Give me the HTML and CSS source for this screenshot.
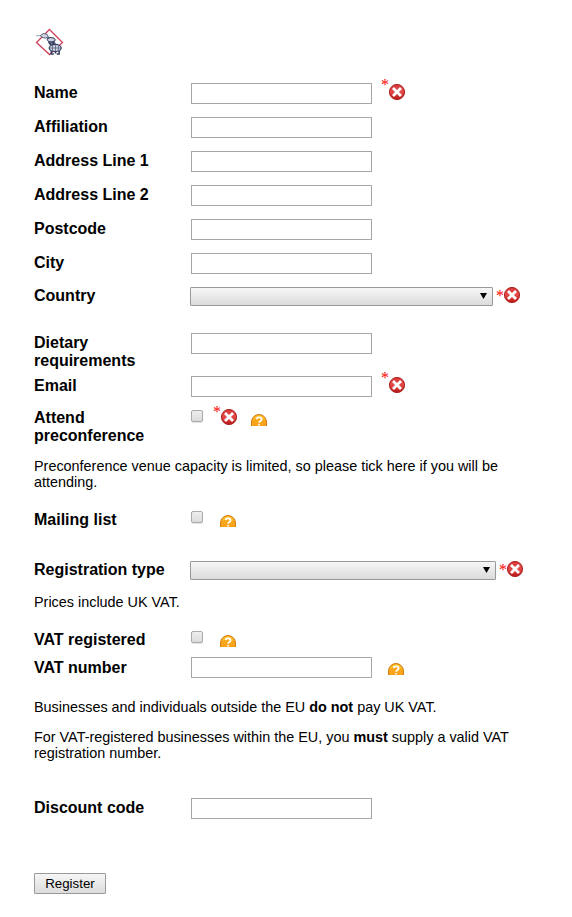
FILE: index.html
```html
<!DOCTYPE html>
<html lang="en">
<head>
  <meta charset="UTF-8" />
  <title>Registration</title>
  <link rel="stylesheet" href="styles.css">
</head>
<body>
  <!-- shared icons -->
  <svg class="defs" width="0" height="0">
    <defs>
      <linearGradient id="red" x1="0" y1="0" x2="0" y2="1">
        <stop offset="0" stop-color="#d83a3a"/>
        <stop offset="0.5" stop-color="#e34b4b"/>
        <stop offset="1" stop-color="#b81616"/>
      </linearGradient>
      <linearGradient id="orange" x1="0" y1="0" x2="0" y2="1">
        <stop offset="0" stop-color="#f8b01c"/>
        <stop offset="1" stop-color="#fba01c"/>
      </linearGradient>
    </defs>
    <symbol id="cross" viewBox="0 0 16 16">
      <circle cx="8" cy="8" r="7.6" fill="url(#red)" stroke="#a51212" stroke-width="0.9"/>
      <path d="M5 5l6 6M11 5l-6 6" stroke="#fff" stroke-width="2.8" stroke-linecap="square"/>
    </symbol>
    <symbol id="help" viewBox="0 0 16 12">
      <path d="M.5 12V8a7.5 7.5 0 0 1 15 0v4z" fill="url(#orange)"/>
      <path d="M.5 12V8a7.5 7.5 0 0 1 15 0v4" fill="none" stroke="#d27a13"/>
      <path d="M2.5 5.5a6 6 0 0 1 11 0" fill="none" stroke="#ffcf3a"/>
      <path d="M5.6 5.2c.3-2.4 5-2.4 5 .2 0 1.7-2.5 1.5-2.5 3.3" fill="none" stroke="#fff" stroke-width="1.8"/>
      <path d="M7.2 10h1.7v1.4H7.2z" fill="#fff"/>
    </symbol>
  </svg>

  <header>
    <svg class="logo" width="30" height="30" viewBox="0 0 30 30">
      <path d="M14.5 1.5L27.5 14.5 14.5 26.5 1.5 14.5z" fill="#fff" stroke="#d0405a" stroke-width="1.3"/>
      <path d="M1 7.6l5 .3" stroke="#9aa5b5"/>
      <path d="M5.5 7.5l3-2 3.5.7 1.3 2.4-2.8 1.6-3.5-.8z" fill="#cdd3de" stroke="#59627c"/>
      <path d="M11 9l2.5 4 3 6 5-1-2-6-5-3z" fill="#6d7690"/>
      <path d="M12 11.2l3-1.7 4 .5 1.4 2.2-3 1.8-4-.5z" fill="#cdd3de" stroke="#343e62"/>
      <path d="M13.5 14l3 4M17 13.5l3 3.5" stroke="#343e62" stroke-width="1.3"/>
      <ellipse cx="20.2" cy="20" rx="6" ry="3.6" fill="#cdd3de" stroke="#343e62" stroke-width="1.2"/>
      <path d="M14.5 20h11.5M17.5 17v6M20.5 16.5v7M23.4 17.5v5.5" stroke="#59627c" stroke-width=".8"/>
      <path d="M16.3 23v3h2.5M20.5 23v2.5M24.2 23v3h-2.5" fill="none" stroke="#343e62" stroke-width="1.5"/>
    </svg>
  </header>

  <form>
    <div class="row">
      <label for="name">Name</label>
      <input type="text" class="text" id="name">
      <span class="star">*</span><svg class="cross"><use href="#cross"/></svg>
    </div>
    <div class="row">
      <label for="affiliation">Affiliation</label>
      <input type="text" class="text" id="affiliation">
    </div>
    <div class="row">
      <label for="address1">Address Line 1</label>
      <input type="text" class="text" id="address1">
    </div>
    <div class="row">
      <label for="address2">Address Line 2</label>
      <input type="text" class="text" id="address2">
    </div>
    <div class="row">
      <label for="postcode">Postcode</label>
      <input type="text" class="text" id="postcode">
    </div>
    <div class="row">
      <label for="city">City</label>
      <input type="text" class="text" id="city">
    </div>
    <div class="row select-row country">
      <label>Country</label>
      <div class="select"><svg width="7" height="6"><path d="M0 0h7L3.5 6z"/></svg></div>
      <span class="star">*</span><svg class="cross"><use href="#cross"/></svg>
    </div>
    <div class="row dietary">
      <label for="dietary">Dietary requirements</label>
      <input type="text" class="text" id="dietary">
    </div>
    <div class="row email">
      <label for="email">Email</label>
      <input type="text" class="text" id="email">
      <span class="star">*</span><svg class="cross"><use href="#cross"/></svg>
    </div>
    <div class="row check-row attend">
      <label>Attend preconference</label>
      <span class="check"></span>
      <span class="star">*</span><svg class="cross"><use href="#cross"/></svg>
      <svg class="help"><use href="#help"/></svg>
    </div>
    <p>Preconference venue capacity is limited, so please tick here if you will be attending.</p>

    <div class="row check-row mailing">
      <label>Mailing list</label>
      <span class="check"></span>
      <svg class="help"><use href="#help"/></svg>
    </div>
    <div class="row select-row regtype">
      <label>Registration type</label>
      <div class="select"><svg width="7" height="6"><path d="M0 0h7L3.5 6z"/></svg></div>
      <span class="star">*</span><svg class="cross"><use href="#cross"/></svg>
    </div>
    <p>Prices include UK VAT.</p>

    <div class="row check-row vat">
      <label>VAT registered</label>
      <span class="check"></span>
      <svg class="help"><use href="#help"/></svg>
    </div>
    <div class="row vatnumber">
      <label for="vatnumber">VAT number</label>
      <input type="text" class="text" id="vatnumber">
      <svg class="help"><use href="#help"/></svg>
    </div>
    <p>Businesses and individuals outside the EU <b>do not</b> pay UK VAT.</p>
    <p>For VAT-registered businesses within the EU, you <b>must</b> supply a valid VAT registration number.</p>

    <div class="row discount">
      <label for="discount">Discount code</label>
      <input type="text" class="text" id="discount">
    </div>
    <button type="button">Register</button>
  </form>
</body>
</html>
```

FILE: styles.css
```css
body {
  margin: 0;
  padding: 27px 34px 0;
  background: #fff;
  color: #000;
  font-family: "Liberation Sans", Arial, sans-serif;
  font-size: 14.4px;
}

.defs {
  display: block;
}

header {
  box-sizing: border-box;
  height: 56px;
  padding: 1px 0 0 1px;
}

.logo {
  display: block;
}

.row {
  display: flex;
  align-items: flex-start;
  height: 34px;
}

label {
  width: 135px;
  margin-right: 22px;
  padding-top: 1px;
  flex: none;
  font-size: 16px;
  font-weight: bold;
  line-height: 18px;
}

.text {
  box-sizing: border-box;
  width: 181px;
  height: 21px;
  margin: 0;
  padding: 1px;
  border: 1px solid #a6a6a6;
  border-radius: 0;
  background: #fff;
}

.star {
  width: 8px;
  height: 16px;
  margin: -7px 0 0 9px;
  color: #f00;
  font: 16px/18px "Liberation Serif", "Times New Roman", serif;
}

.cross {
  width: 16px;
  height: 16px;
  margin-top: 1px;
}

.help {
  width: 16px;
  height: 12px;
  margin: 6px 0 0 16px;
}

/* dropdowns */
.select-row label {
  margin-right: 21px;
  padding-top: 0;
}

.select {
  box-sizing: border-box;
  display: flex;
  justify-content: flex-end;
  width: 303px;
  height: 19px;
  padding: 5px 5px 0 0;
  border: 1px solid #999;
  border-radius: 1px;
  background: linear-gradient(#f6f6f6, #dcdcdc);
}

.select-row .star {
  margin: 0 0 0 3px;
}

.select-row .cross {
  margin-top: 0;
}

/* tick boxes */
.check-row label {
  padding-top: 0;
}

.check {
  box-sizing: border-box;
  width: 12px;
  height: 12px;
  border: 1px solid #a9a9a9;
  border-radius: 2px;
  background: linear-gradient(#eee, #dcdcdc);
  box-shadow: 0 1px 1px #e4e4e4;
}

.check-row .star {
  margin: -7px 0 0 10px;
}

.check-row .cross {
  margin-top: -1px;
}

.check-row .help {
  margin: 4px 0 0 17px;
}

.attend label {
  margin-top: -1px;
}

.attend .help {
  margin-left: 14px;
}

.country {
  height: 46px;
}

.dietary {
  height: 43px;
}

.attend {
  height: 48px;
}

.mailing {
  height: 50px;
  margin-top: 21px;
}

.regtype {
  height: 33px;
}

.regtype .select {
  width: 306px;
}

.vat {
  height: 26px;
  margin-top: 21px;
}

.vatnumber {
  height: 42px;
}

.vatnumber label {
  padding-top: 2px;
}

.discount {
  height: 75px;
  margin-top: 37px;
}

p {
  margin: 0;
  line-height: 16px;
}

p + p {
  margin-top: 14px;
}

button {
  display: block;
  box-sizing: border-box;
  width: 72px;
  height: 21px;
  padding: 0;
  border: 1px solid #999;
  border-radius: 1px;
  background: linear-gradient(#f6f6f6, #dcdcdc);
  color: #000;
  font: 13.33px "Liberation Sans", Arial, sans-serif;
}
```
